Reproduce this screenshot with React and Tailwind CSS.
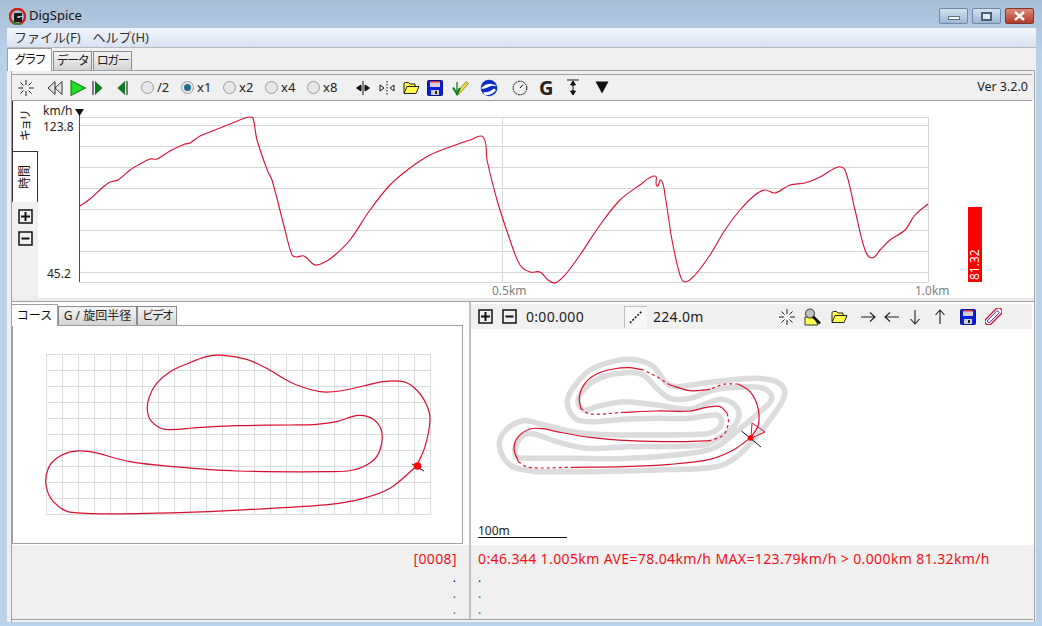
import React from "react";

const FONT = "[font-family:'Noto_Sans','Noto_Sans_CJK_JP',sans-serif]";

const speed = [
  [80,206],[90,199],[102,188],[110,182],[118,180],[130,170],[140,164],[150,159],[157,159],[170,151],[185,144],[190,143],[200,136],[215,130],[230,124],[245,118],[250,117],[253,118],[257,140],[268,172],[272,180],[285,230],[292,255],[296,257],[304,256],[315,265],[325,262],[335,255],[350,240],[370,210],[390,185],[410,168],[430,155],[450,147],[470,140],[483,137],[487,160],[497,200],[510,240],[520,265],[530,272],[540,272],[548,280],[555,283],[565,275],[580,255],[600,225],[620,200],[640,185],[655,176],[657,186],[661,180],[665,195],[672,240],[680,275],[685,282],[695,275],[710,255],[725,230],[740,210],[755,195],[765,190],[775,193],[790,185],[805,183],[820,177],[838,167],[845,170],[855,210],[865,250],[872,258],[880,250],[890,240],[905,230],[915,215],[928,204],
];

const course = [
  [1160,378],[1185,320],[1200,240],[1190,195],[1160,150],[1120,125],[1060,125],[1000,138],[930,153],[870,155],[800,135],[760,115],[710,85],[650,58],[580,46],[530,50],[470,72],[420,95],[380,130],[358,170],[352,210],[365,245],[405,268],[500,263],[620,257],[780,255],[860,253],[920,245],[985,226],[1030,238],[1055,275],[1050,330],[1025,365],[970,390],[900,395],[620,393],[430,380],[300,365],[180,335],[125,335],[80,355],[55,385],[48,435],[70,485],[125,517],[450,518],[720,505],[900,493],[1000,475],[1080,445],[1160,378],
].map(([x, y]) => [30 + x / 3, 340 + y / 3]);

const track = [
  [780,265],[805,225],[803,170],[780,125],[745,102],[700,103],[660,118],[600,122],[540,105],[500,80],[460,60],[420,53],[370,57],[320,72],[285,100],[268,140],[272,175],[300,192],[400,187],[500,183],[600,183],[650,172],[690,170],[712,190],[715,220],[700,255],[660,272],[560,275],[420,272],[300,262],[200,245],[160,236],[120,237],[85,260],[72,295],[85,335],[115,352],[250,352],[400,350],[540,343],[660,328],[730,300],[780,265],
].map(([x, y]) => [490 + x / 3, 350 + y / 3]);

const edgeOuter = [
  [130,365],[300,365],[500,360],[680,350],[740,320],[790,270],[850,195],[885,130],[860,95],[790,85],[700,92],[600,105],[560,110],[530,100],[490,50],[440,30],[380,32],[300,60],[245,120],[232,160],[255,205],[300,215],[400,208],[500,205],[600,205],[680,195],[695,215],[680,240],[640,252],[450,255],[280,250],[150,222],[100,212],[50,238],[28,285],[60,345],[130,365],
].map(([x, y]) => [490 + x / 3, 350 + y / 3]);

const edgeInner = [
  [100,325],[260,325],[420,325],[600,310],[680,290],[745,240],[810,185],[845,145],[820,115],[740,112],[670,120],[600,145],[540,145],[500,115],[460,75],[410,68],[340,80],[290,110],[265,150],[280,180],[320,170],[400,155],[500,165],[600,178],[650,160],[700,148],[745,180],[735,225],[690,262],[640,285],[420,290],[290,295],[200,275],[120,250],[90,265],[75,295],[80,320],[100,325],
].map(([x, y]) => [490 + x / 3, 350 + y / 3]);

const trackParts = [
  [0,4,0],[4,6,1],[6,8,0],[8,10,1],[10,16,0],[16,18,1],[18,23,0],[23,26,1],[26,35,0],[35,37,1],[37,42,0],
];

// spline through the points, handles scaled to the segment so long straights don't overshoot
const smooth = (pts) => {
  let d = `M${pts[0][0]} ${pts[0][1]}`;
  const handle = (from, to, len) => {
    const l = Math.hypot(to[0] - from[0], to[1] - from[1]) || 1;
    return [((to[0] - from[0]) / l) * len, ((to[1] - from[1]) / l) * len];
  };
  for (let i = 0; i < pts.length - 1; i++) {
    const a = pts[i - 1] || pts[i];
    const b = pts[i];
    const c = pts[i + 1];
    const e = pts[i + 2] || c;
    const len = Math.hypot(c[0] - b[0], c[1] - b[1]) / 3;
    const h1 = handle(a, c, len);
    const h2 = handle(b, e, len);
    d += `C${b[0] + h1[0]} ${b[1] + h1[1]} ${c[0] - h2[0]} ${c[1] - h2[1]} ${c[0]} ${c[1]}`;
  }
  return d;
};

const range = (from, to, step) => {
  const r = [];
  for (let v = from; v <= to; v += step) r.push(v);
  return r;
};

const Spark = () => (
  <svg width="18" height="18" viewBox="0 0 18 18" stroke="#222" strokeWidth="1">
    <path d="M9 1v5M9 12v5M1 9h5M12 9h5M3.500 3.500l3 3M11.500 11.500l3 3M14.500 3.500l-3 3M6.500 11.500l-3 3" />
  </svg>
);

const Box = ({ minus }) => (
  <svg width="15" height="15" viewBox="0 0 15 15">
    <rect x="1" y="1" width="13" height="13" fill="none" stroke="#111" strokeWidth="1.500" />
    <path d={minus ? "M3.500 7.500h8" : "M3 7.500h9M7.500 3v9"} stroke="#111" strokeWidth="2" />
  </svg>
);

const Folder = () => (
  <svg width="17" height="14" viewBox="0 0 17 14">
    <path d="M1 12V3q0-1.500 1.500-1.500h3L7 3h5v2.500" fill="#ffff50" stroke="#222" />
    <path d="M1 12.500L4 5.500h12l-3 7z" fill="#ffff50" stroke="#222" />
  </svg>
);

const Floppy = () => (
  <svg width="16" height="16" viewBox="0 0 16 16">
    <rect x="0.500" y="0.500" width="15" height="15" rx="1" fill="#0a1fd8" stroke="#081490" />
    <rect x="3" y="1" width="10" height="6" fill="#d8d0d0" />
    <rect x="3" y="1" width="10" height="1.500" fill="#d03040" />
    <rect x="4" y="10" width="8" height="5" fill="#d0d0d0" />
    <rect x="8" y="11" width="2" height="3" fill="#222" />
  </svg>
);

const Radio = ({ on, label }) => (
  <div className="flex items-center gap-[3px]">
    <div className="w-[13px] h-[13px] rounded-full border border-[#9a9a9a] bg-[#e8e8e8] flex items-center justify-center">
      {on && <div className="w-[7px] h-[7px] rounded-full bg-[#1f6f93]" />}
    </div>
    <span className="text-[13px] text-[#222]">{label}</span>
  </div>
);

const Tab = ({ active, children, className }) => (
  <div
    className={
      active
        ? `bg-white border border-b-0 border-[#a0a0a0] flex items-center justify-center text-[12px] text-[#111] ${className}`
        : `bg-[linear-gradient(#f4f4f4,#d4d4d4)] border border-b-0 border-[#8a8a8a] flex items-center justify-center text-[12px] text-[#222] ${className}`
    }
  >
    {children}
  </div>
);

const WinButton = ({ close, children }) => (
  <div
    className={
      close
        ? "w-[29px] h-[16px] rounded-[2px] border border-[#7a3a30] bg-[linear-gradient(#dc8a78,#b83a28)] flex items-center justify-center"
        : "w-[29px] h-[16px] rounded-[2px] border border-[#6f8aa6] bg-[linear-gradient(#d4e2f0,#9db7d1)] flex items-center justify-center"
    }
  >
    {children}
  </div>
);

const TopToolbar = () => (
  <div className="h-[27px] mr-[2px] bg-[#f0f0f0] border-y border-[#a0a0a0] flex items-center">
    <div className="ml-[5px]"><Spark /></div>
    <svg className="ml-[12px]" width="16" height="16" viewBox="0 0 16 16" fill="#dfe8df" stroke="#333">
      <path d="M8 1.500L1 8l7 6.500zM15 1.500L8 8l7 6.500z" />
    </svg>
    <svg className="ml-[7px]" width="16" height="16" viewBox="0 0 16 16">
      <path d="M1 0.500L15.500 8 1 15.500z" fill="#1ee01e" stroke="#0a700a" />
    </svg>
    <svg className="ml-[6px]" width="11" height="16" viewBox="0 0 11 16">
      <path d="M1 1v14" stroke="#555" strokeWidth="1.500" />
      <path d="M3 1l7.500 7L3 15z" fill="#0b7a1c" />
    </svg>
    <svg className="ml-[14px]" width="11" height="16" viewBox="0 0 11 16">
      <path d="M8 1L0.500 8 8 15z" fill="#0b7a1c" />
      <path d="M10 1v14" stroke="#555" strokeWidth="1.500" />
    </svg>
    <div className="ml-[13px] w-[40px]"><Radio label="/2" /></div>
    <div className="w-[42px]"><Radio on label="x1" /></div>
    <div className="w-[42px]"><Radio label="x2" /></div>
    <div className="w-[42px]"><Radio label="x4" /></div>
    <div className="w-[48px]"><Radio label="x8" /></div>
    <svg width="16" height="16" viewBox="0 0 16 16" stroke="#111" fill="#111">
      <path d="M8 1v14" />
      <path d="M1.500 8L6 5v6zM14.500 8L10 5v6z" />
    </svg>
    <svg className="ml-[8px]" width="16" height="16" viewBox="0 0 16 16" stroke="#111" fill="#fff">
      <path d="M8 1v14" strokeDasharray="1.500 1.500" />
      <path d="M1 5v6l4-3zM15 5v6l-4-3z" />
    </svg>
    <div className="ml-[8px]"><Folder /></div>
    <div className="ml-[7px]"><Floppy /></div>
    <svg className="ml-[9px]" width="17" height="17" viewBox="0 0 17 17">
      <path d="M4 14L14.500 2.500l2 2L6 16z" fill="#f4e040" stroke="#6a7020" strokeWidth="0.800" />
      <path d="M1 8.500L5 15l3-6" fill="none" stroke="#0b7a1c" strokeWidth="2" />
      <path d="M5 3v13" stroke="#0b7a1c" strokeWidth="1.300" />
    </svg>
    <svg className="ml-[11px]" width="18" height="18" viewBox="0 0 18 18">
      <circle cx="9" cy="9" r="8.300" fill="#0a2fc0" />
      <path d="M1.500 8.500q5-4.500 10-3.500t5 2.500q-4-1.500-8 .5t-7 2zM3 13q6 1 11-3.500l2 1.500q-4 6-11 5z" fill="#fff" />
    </svg>
    <svg className="ml-[14px]" width="16" height="16" viewBox="0 0 16 16" fill="none" stroke="#111">
      <circle cx="8" cy="8" r="6.800" strokeDasharray="2 0.700" />
      <path d="M8 8l3-3.500" />
    </svg>
    <span className="ml-[11px] text-[20px] font-bold text-[#222] leading-none">G</span>
    <svg className="ml-[13px]" width="14" height="18" viewBox="0 0 14 18" stroke="#111" fill="#111">
      <path d="M1 1h12M7 2v14" />
      <path d="M7 2L4.500 6h5zM7 16l-2.500-4h5z" />
    </svg>
    <svg className="ml-[15px]" width="14" height="13" viewBox="0 0 14 13">
      <path d="M0.500 0.500h13L7 12.500z" fill="#111" />
    </svg>
    <span className="ml-auto mr-[4px] text-[12.500px] text-[#222]">Ver 3.2.0</span>
  </div>
);

const SideTabs = () => (
  <div className="w-[26px] flex flex-col">
    <div className="h-[51px] bg-white border-l border-b border-[#333] flex items-center justify-center">
      <span className="-rotate-90 text-[12px] tracking-[-2px] text-[#111] whitespace-nowrap">キョリ</span>
    </div>
    <div className="h-[50px] bg-white border-l border-r border-[#333] flex items-center justify-center">
      <span className="-rotate-90 text-[12px] text-[#111] whitespace-nowrap">時間</span>
    </div>
    <div className="flex-1 bg-[#f0f0f0] flex flex-col pl-[6px] pt-[7px] gap-[7px]">
      <Box />
      <Box minus />
    </div>
  </div>
);

const Chart = () => (
  <svg width="995" height="197" viewBox="38 101 995 197" className="block overflow-visible">
    {[117, 125, 146, 167, 188, 209, 230, 251, 272, 282].map((y) => (
      <path key={y} d={`M79 ${y}.5H928`} stroke="#d8d8d8" />
    ))}
    <path d="M502.500 117V282M928.500 117V282" stroke="#d8d8d8" />
    <path d="M79.500 112V282" stroke="#d01030" />
    <path d="M75 109h9l-4.500 7z" fill="#111" />
    <path d={smooth(speed)} fill="none" stroke="#d81030" strokeWidth="1.100" />
    <text x="43" y="115" fontSize="12" fill="#222">km/h</text>
    <text x="43" y="131" fontSize="12" fill="#222">123.8</text>
    <text x="47" y="278" fontSize="12" fill="#222">45.2</text>
    <text x="492" y="295" fontSize="12" fill="#808080">0.5km</text>
    <text x="915" y="295" fontSize="12" fill="#808080">1.0km</text>
    <rect x="968" y="207" width="14" height="75" fill="#ff0000" />
    <text transform="translate(979 280) rotate(-90)" fontSize="12" fill="#fff">81.32</text>
  </svg>
);

const CourseMap = () => (
  <svg width="449" height="217" viewBox="13 326 449 217" className="block">
    {range(46, 430, 16).map((x) => (
      <path key={x} d={`M${x}.5 354V514`} stroke="#dcdcdc" />
    ))}
    {range(354, 514, 16).map((y) => (
      <path key={y} d={`M46 ${y}.5H431`} stroke="#dcdcdc" />
    ))}
    <path d={smooth(course)} fill="none" stroke="#d81030" strokeWidth="1.200" />
    <path d="M412 464L424 471" stroke="#111" />
    <circle cx="417.500" cy="466" r="3.800" fill="#ff0000" />
  </svg>
);

const TrackMap = () => (
  <svg width="561" height="216" viewBox="471 329 561 216" className="block">
    <path d={smooth(edgeOuter)} fill="none" stroke="#dcdcdc" strokeWidth="5.500" />
    <path d={smooth(edgeInner)} fill="none" stroke="#dcdcdc" strokeWidth="5.500" />
    {trackParts.map(([a, b, dash]) => (
      <path
        key={a}
        d={smooth(track.slice(a, b + 1))}
        fill="none"
        stroke="#d81030"
        strokeWidth="1.200"
        strokeDasharray={dash ? "3 3" : undefined}
      />
    ))}
    <path d="M741.500 431L761 447" stroke="#111" />
    <path d="M752 423L765 432L751 438Z" fill="none" stroke="#d81030" />
    <circle cx="750.500" cy="438" r="2.800" fill="#ff0000" />
    <text x="478" y="535" fontSize="12" fill="#222">100m</text>
    <path d="M478 537.500H567" stroke="#111" />
  </svg>
);

const Arrow = ({ d }) => (
  <svg width="16" height="16" viewBox="0 0 16 16" fill="none" stroke="#222" strokeWidth="1.100">
    <path d={d} />
  </svg>
);

const MapToolbar = () => (
  <div className="mt-[2px] mr-[2px] h-[25px] bg-[#f0f0f0] flex items-center">
    <div className="ml-[7px]"><Box /></div>
    <div className="ml-[9px]"><Box minus /></div>
    <span className="ml-[9px] w-[98px] text-[14px] tracking-[0.3px] text-[#222]">0:00.000</span>
    <div className="w-[23px] h-[22px] border-l border-t border-[#bdbdbd] bg-[#f6f6f6] flex items-center justify-center">
      <svg width="16" height="14" viewBox="0 0 16 14" stroke="#111" strokeWidth="1.500" strokeDasharray="2 1.500">
        <path d="M2 13L14 1" />
      </svg>
    </div>
    <span className="ml-[6px] w-[125px] text-[14px] tracking-[0.3px] text-[#222]">224.0m</span>
    <div><Spark /></div>
    <svg className="ml-[8px]" width="17" height="18" viewBox="0 0 17 18">
      <path d="M1 9v8h13l-3-6-4-2z" fill="#ffff50" stroke="#333" />
      <circle cx="6" cy="5.500" r="4.500" fill="#c0c0c0" stroke="#333" />
      <path d="M9 8.500l7 7" stroke="#111" strokeWidth="2.500" />
    </svg>
    <div className="ml-[10px]"><Folder /></div>
    <div className="ml-[12px]"><Arrow d="M1 8h14M10 3.500L15 8l-5 4.500" /></div>
    <div className="ml-[8px]"><Arrow d="M15 8H1M6 3.500L1 8l5 4.500" /></div>
    <div className="ml-[7px]"><Arrow d="M8 1v14M3.500 10L8 15l4.500-5" /></div>
    <div className="ml-[9px]"><Arrow d="M8 15V1M3.500 6L8 1l4.500 5" /></div>
    <div className="ml-[12px]"><Floppy /></div>
    <svg className="ml-[9px]" width="17" height="17" viewBox="0 0 17 17" fill="none">
      <rect x="-2" y="5" width="21" height="7" rx="3.500" transform="rotate(-45 8.500 8.500)" stroke="#d01030" strokeWidth="1.300" fill="#fff" />
      <rect x="0.500" y="7" width="15" height="3" rx="1.500" transform="rotate(-45 8.500 8.500)" stroke="#2020c0" strokeWidth="0.900" />
    </svg>
  </div>
);

const Dots = ({ align }) => (
  <div className={`flex flex-col ${align} mt-[5px] gap-[9px] text-[12px] leading-[7px]`}>
    <span className="text-[#101080]">.</span>
    <span className="text-[#107070]">.</span>
    <span className="text-[#108040]">.</span>
  </div>
);

export default function App() {
  return (
    <div className={`w-[1042px] h-[626px] overflow-hidden flex flex-col bg-[linear-gradient(#a9bfd6,#bad1ea_60px)] ${FONT}`}>
      <div className="h-[28px] pt-[4px] flex items-center pl-[9px] pr-[8px]">
        <svg width="17" height="17" viewBox="0 0 17 17">
          <circle cx="8.500" cy="8.500" r="7.500" fill="none" stroke="#d02018" strokeWidth="2.500" />
          <path d="M3 13a7.500 7.500 0 0 0 9 2.500" fill="none" stroke="#2a8a3a" strokeWidth="2" />
          <path d="M5 5h8v3H8.500v2H11V9h2v5H5z" fill="#1a1a1a" />
        </svg>
        <span className="ml-[3px] text-[13px] text-[#111]">DigSpice</span>
        <div className="ml-auto flex gap-[4px]">
          <WinButton><div className="w-[12px] h-[4px] bg-white border border-[#5a6f88] mt-[3px]" /></WinButton>
          <WinButton><div className="w-[11px] h-[9px] bg-white/60 border-2 border-[#4a5f78]" /></WinButton>
          <WinButton close>
            <svg width="13" height="10" viewBox="0 0 13 10" stroke="#fff" strokeWidth="2.500"><path d="M2 1l9 8M11 1l-9 8" /></svg>
          </WinButton>
        </div>
      </div>

      <div className="ml-[7px] mr-[6px] h-[20px] px-[7px] flex items-center gap-[12px] text-[13px] text-[#333] bg-[linear-gradient(#f2f6fc,#d8e2f2)] border-b border-[#b8b8b8]">
        <span>ファイル(F)</span>
        <span>ヘルプ(H)</span>
      </div>

      <div className="ml-[7px] mr-[6px] flex-1 flex flex-col bg-[#f0f0f0] mb-[4px]">
        <div className="h-[23px] flex items-end gap-px border-b border-[#a0a0a0] mr-px">
          <Tab active className="w-[45px] h-[23px] -mb-px relative tracking-[-2px]">グラフ</Tab>
          <Tab className="w-[39px] h-[19px] tracking-[-1.500px]">データ</Tab>
          <Tab className="w-[39px] h-[19px] tracking-[-1.500px]">ロガー</Tab>
        </div>

        <div className="ml-[4px] mr-px pt-[3px] flex-1 flex flex-col border-x border-[#a0a0a0]">
          <TopToolbar />
          <div className="flex bg-white h-[197px]">
            <SideTabs />
            <Chart />
          </div>
          <div className="h-[3px] bg-[#ececec]" />

          <div className="flex h-[244px] bg-white border-t border-[#a0a0a0]">
            <div className="w-[459px] flex flex-col border-r-2 border-[#c0c0c0]">
              <div className="h-[23px] pt-[2px] flex items-end">
                <Tab active className="w-[46px] h-[22px] -mb-px relative border-l-0">コース</Tab>
                <Tab className="w-[79px] h-[19px]">G / 旋回半径</Tab>
                <Tab className="w-[40px] h-[19px] tracking-[-2px]">ビデオ</Tab>
              </div>
              <div className="w-[451px] h-[219px] border border-[#a0a0a0]">
                <CourseMap />
              </div>
            </div>
            <div className="flex-1 flex flex-col">
              <MapToolbar />
              <TrackMap />
            </div>
          </div>

          <div className="h-[75px] flex bg-[#f0f0f0] border-b border-[#a0a0a0] mr-px">
            <div className="w-[459px] pr-[12px] pt-[4px] text-right border-r-2 border-[#c0c0c0] flex flex-col items-end">
              <span className="text-[14px] leading-[20px] tracking-[0.38px] text-[#f01020]">[0008]</span>
              <Dots align="items-end pr-px" />
            </div>
            <div className="pl-[7px] pt-[4px] flex flex-col">
              <span className="text-[14px] leading-[20px] tracking-[0.38px] text-[#f01020] whitespace-nowrap">0:46.344 1.005km AVE=78.04km/h MAX=123.79km/h &gt; 0.000km 81.32km/h</span>
              <Dots align="items-start" />
            </div>
          </div>
          <div className="h-[2px]" />
        </div>
      </div>
    </div>
  );
}
